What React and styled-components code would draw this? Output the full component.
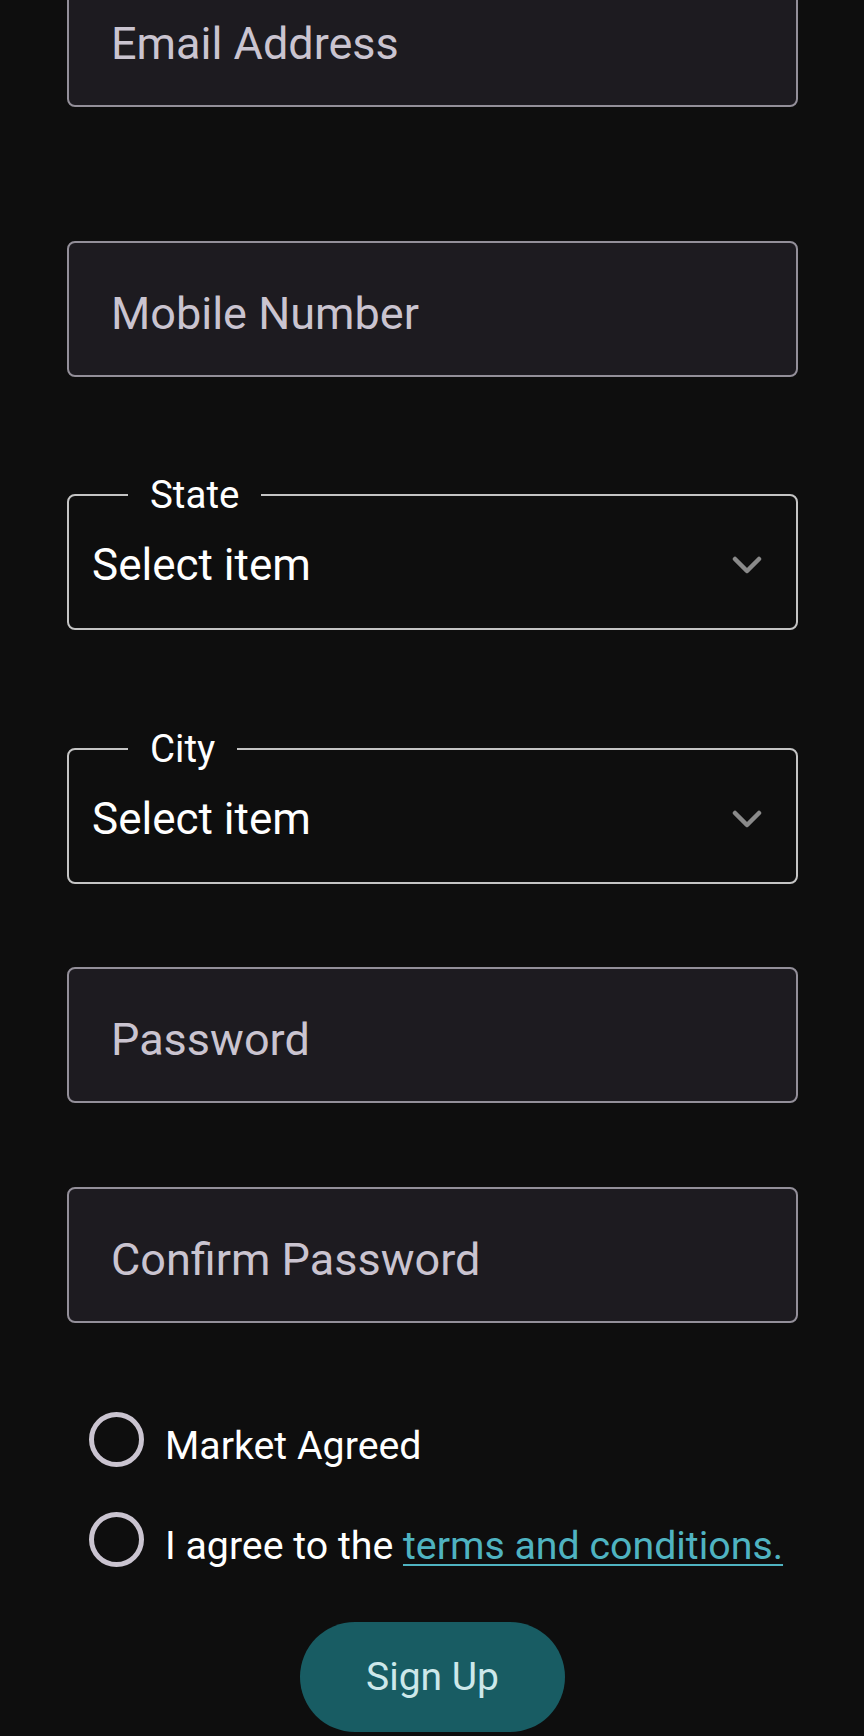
import React from 'react';
import styled, { createGlobalStyle } from 'styled-components';

const GlobalStyle = createGlobalStyle`
  html, body {
    margin: 0;
    padding: 0;
    background-color: #0e0e0e;
    font-family: Roboto, "Noto Sans", sans-serif;
    overflow: hidden;
  }
`;

const Page = styled.div`
  height: 1736px;
  padding: 0 66px 0 67px;
  box-sizing: border-box;
  overflow: hidden;
`;

const Form = styled.form`
  display: flex;
  flex-direction: column;
  margin-top: -29px;
`;

const TextField = styled.input`
  display: block;
  width: 100%;
  height: 136px;
  margin: ${(props) => props.$top || 0}px 0 0;
  padding: 9px 0 0 42px;
  box-sizing: border-box;
  border: 2px solid #938f99;
  border-radius: 8px;
  background-color: #1d1b20;
  color: #e6e1e5;
  font-family: Roboto, sans-serif;
  font-size: 45px;
  outline: none;

  &::placeholder {
    color: #cac4d0;
  }
`;

const Dropdown = styled.fieldset`
  margin: ${(props) => props.$top || 0}px 0 0;
  padding: 0 34px 12px 23px;
  border: 2px solid #c4c4c4;
  border-radius: 8px;
  min-width: 0;
`;

const Legend = styled.legend`
  margin-left: 36px;
  padding: 0 22px;
  font-size: 38.5px;
  line-height: 37px;
  color: #ffffff;
`;

const SelectRow = styled.div`
  display: flex;
  align-items: center;
  justify-content: space-between;
  height: 103px;
`;

const SelectValue = styled.span`
  font-size: 44px;
  color: #ffffff;
`;

const Chevron = () => (
  <svg width="30" height="18" viewBox="0 0 30 18" fill="none">
    <path d="M3 3l12 12L27 3" stroke="#8a8a8a" strokeWidth="4.5" strokeLinecap="round" strokeLinejoin="round" />
  </svg>
);

const Options = styled.div`
  display: flex;
  flex-direction: column;
  gap: 45px;
  margin-top: 89px;
  padding-left: 22px;
`;

const OptionRow = styled.label`
  display: flex;
  align-items: center;
  gap: 21px;
`;

const Radio = styled.span`
  flex: none;
  width: 55px;
  height: 55px;
  box-sizing: border-box;
  border: 5px solid #cac4d0;
  border-radius: 50%;
`;

const OptionText = styled.span`
  margin-top: 12px;
  font-size: 39.3px;
  line-height: 40px;
  color: #ffffff;
  white-space: nowrap;
`;

const Link = styled.a`
  color: #4fb3c1;
  text-decoration: underline;
  text-underline-offset: 5px;
  text-decoration-thickness: 2px;
`;

const SubmitButton = styled.button`
  align-self: center;
  width: 265px;
  height: 110px;
  margin-top: 55px;
  border: none;
  border-radius: 55px;
  background-color: #185c63;
  color: #cde8ea;
  font-family: Roboto, sans-serif;
  font-size: 39px;
  cursor: pointer;
`;

const SelectField = ({ label, top }) => (
  <Dropdown $top={top}>
    <Legend>{label}</Legend>
    <SelectRow>
      <SelectValue>Select item</SelectValue>
      <Chevron />
    </SelectRow>
  </Dropdown>
);

const App = () => {
  return (
    <Page>
      <GlobalStyle />
      <Form onSubmit={(e) => e.preventDefault()}>
        <TextField type="email" placeholder="Email Address" />
        <TextField $top={134} type="tel" placeholder="Mobile Number" />
        <SelectField label="State" top={99} />
        <SelectField label="City" top={100} />
        <TextField $top={83} type="password" placeholder="Password" />
        <TextField $top={84} type="password" placeholder="Confirm Password" />
        <Options>
          <OptionRow>
            <Radio />
            <OptionText>Market Agreed</OptionText>
          </OptionRow>
          <OptionRow>
            <Radio />
            <OptionText>
              I agree to the <Link href="#">terms and conditions.</Link>
            </OptionText>
          </OptionRow>
        </Options>
        <SubmitButton type="submit">Sign Up</SubmitButton>
      </Form>
    </Page>
  );
};

export default App;
